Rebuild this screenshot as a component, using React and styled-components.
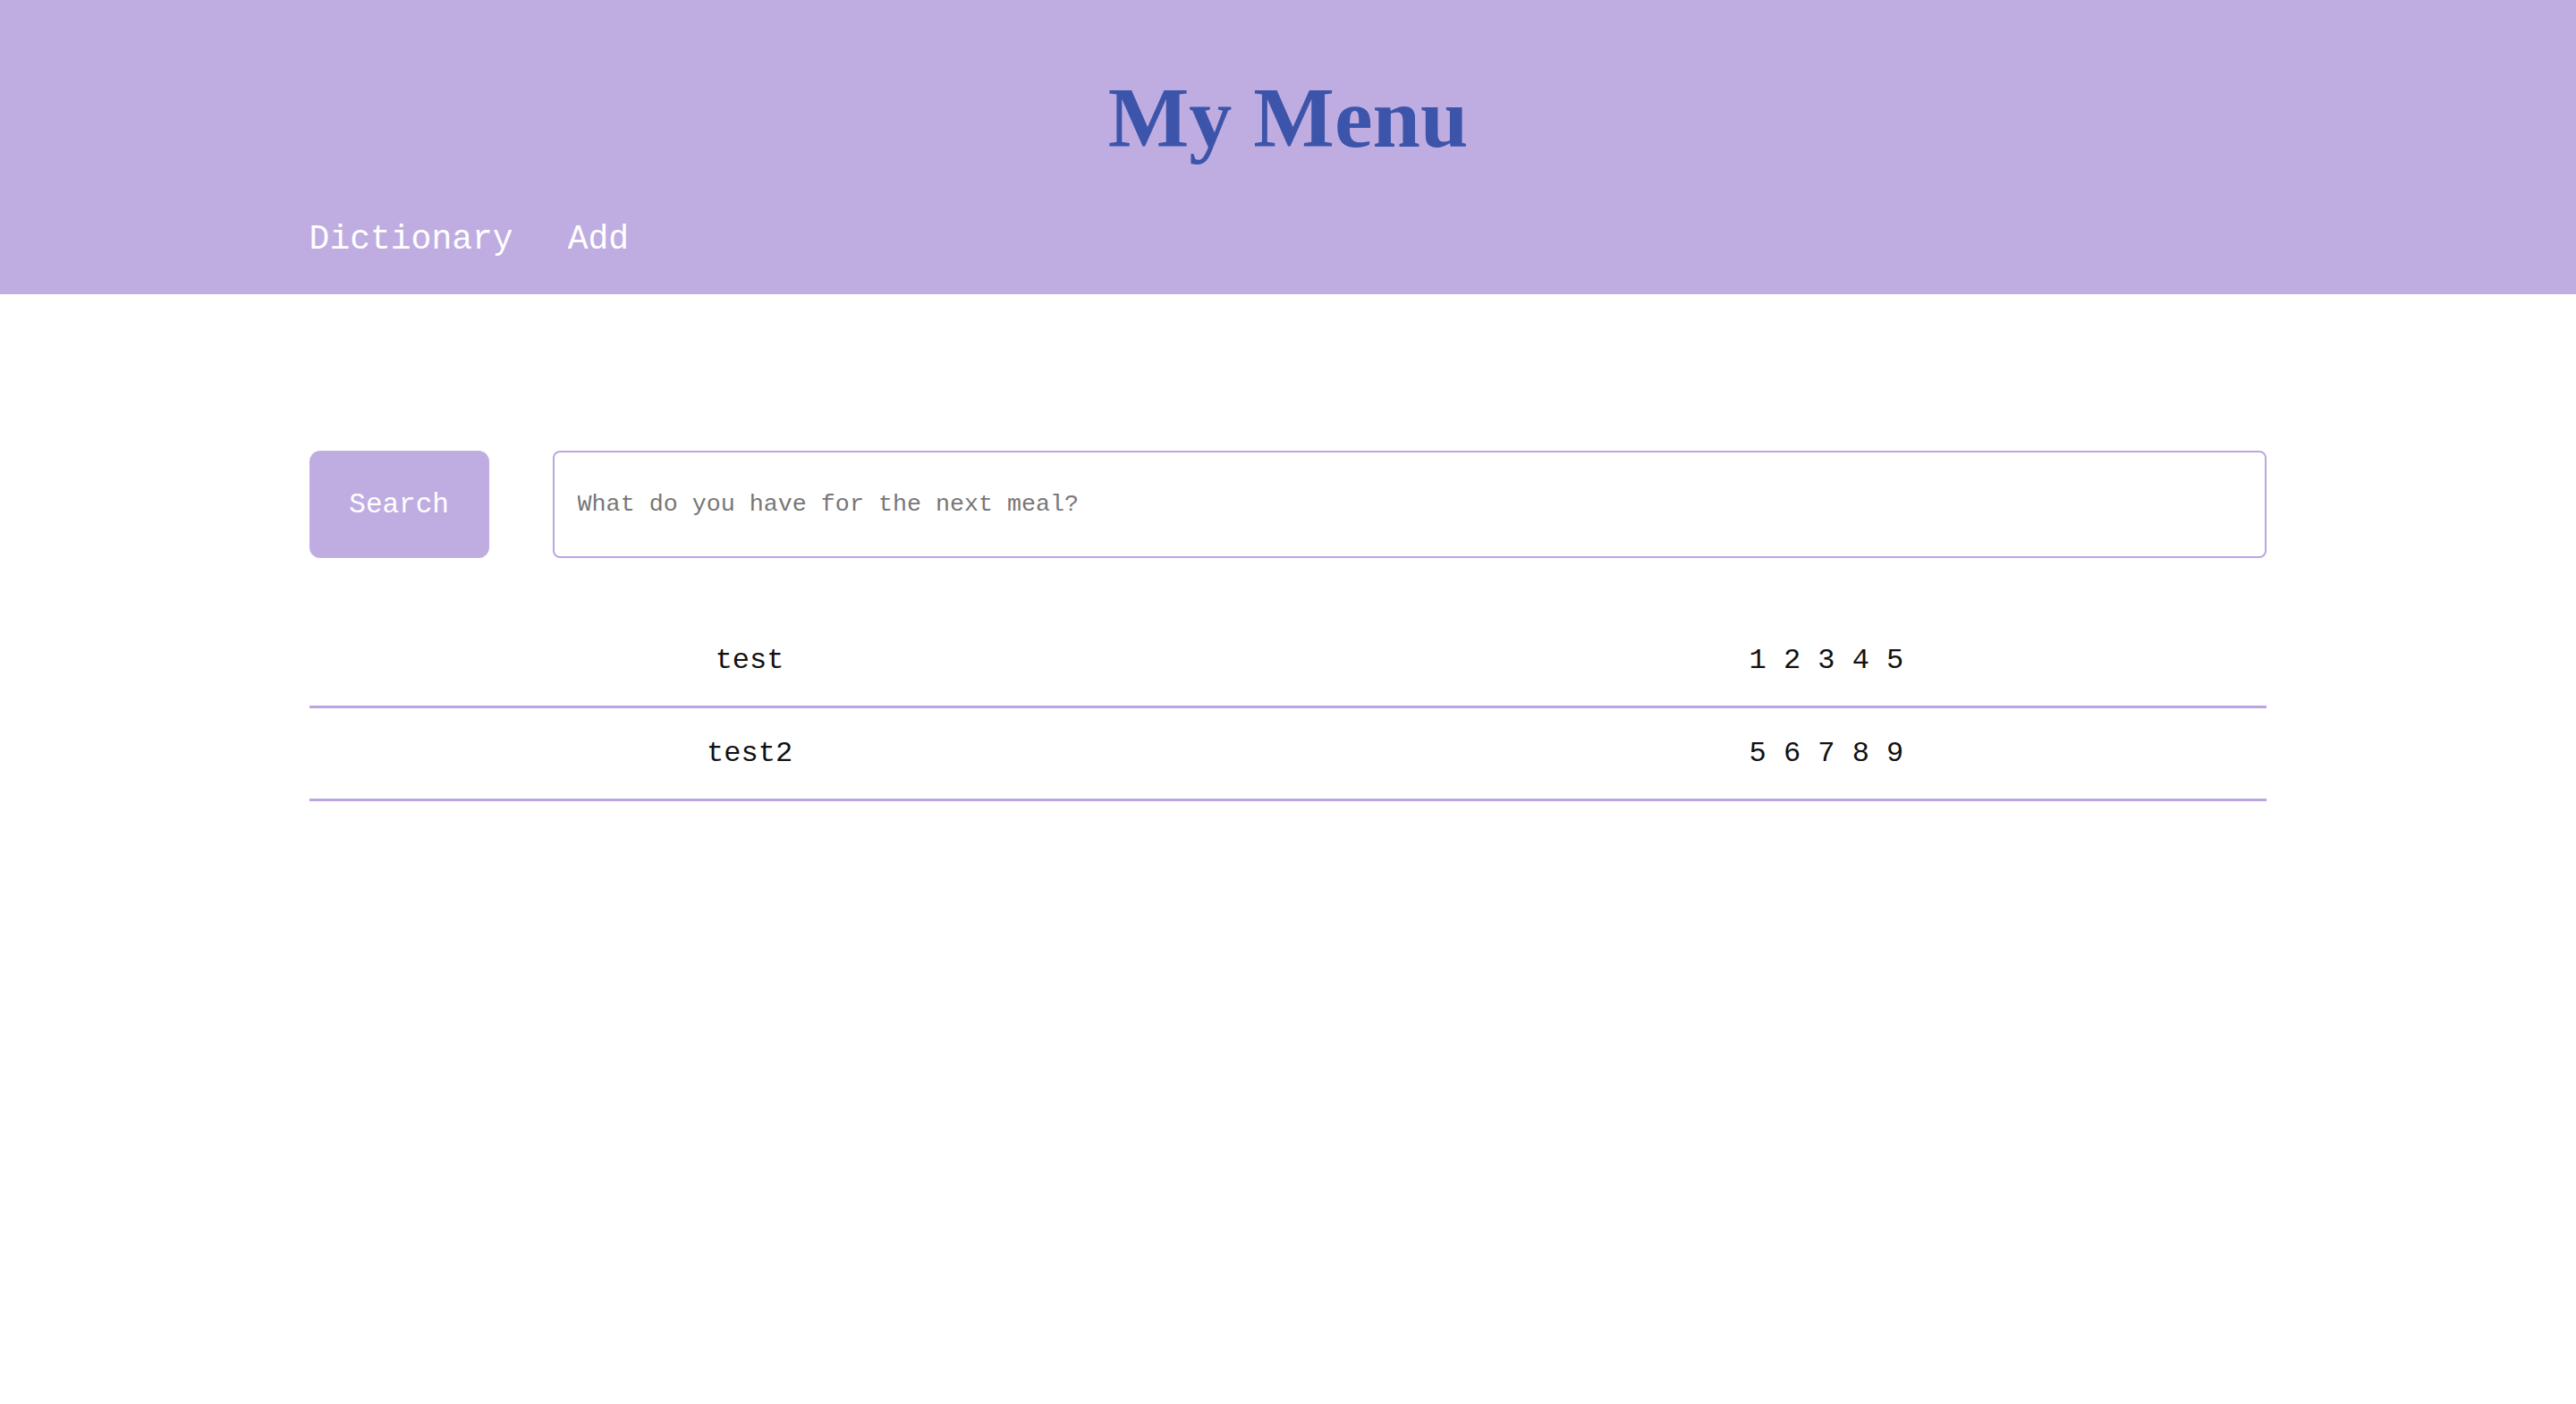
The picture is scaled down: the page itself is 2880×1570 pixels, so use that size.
import React from "react";
import styled, { createGlobalStyle } from "styled-components";

const GlobalStyle = createGlobalStyle`
  html, body { margin: 0; padding: 0; background: #ffffff; }
  body { font-family: "Liberation Mono", "DejaVu Sans Mono", monospace; }
  * { box-sizing: border-box; }
`;

const Header = styled.header`
  background: #bfade1;
  padding: 84px 0 42px;
`;

const Title = styled.h1`
  margin: 0;
  text-align: center;
  font-family: "Liberation Serif", "Times New Roman", serif;
  font-weight: 700;
  font-size: 96px;
  line-height: 96px;
  color: #3c55ab;
`;

const Nav = styled.nav`
  width: 76%;
  margin: 69px auto 0;
  display: flex;
  gap: 61px;
`;

const NavLink = styled.a`
  font-family: "Liberation Mono", monospace;
  font-size: 38px;
  line-height: 38px;
  color: #ffffff;
  text-decoration: none;
  cursor: pointer;
`;

const Main = styled.main`
  width: 76%;
  margin: 0 auto;
  padding-top: 175px;
`;

const SearchRow = styled.form`
  display: flex;
  gap: 71px;
  height: 120px;
  margin-bottom: 64px;
`;

const SearchButton = styled.button`
  flex: 0 0 201px;
  border: none;
  border-radius: 12px;
  background: #bfade1;
  color: #ffffff;
  font-family: "Liberation Mono", monospace;
  font-size: 31px;
  cursor: pointer;
`;

const SearchInput = styled.input`
  flex: 1;
  border: 2px solid #bba6e3;
  border-radius: 8px;
  padding: 0 26px;
  font-family: "Liberation Mono", monospace;
  font-size: 26.7px;
  color: #222;
  outline: none;
  &::placeholder { color: #777777; }
`;

const Row = styled.div`
  display: grid;
  grid-template-columns: 1fr 1fr;
  column-gap: 10%;
  height: 104px;
  align-items: center;
  border-bottom: 3px solid #bba6e3;
`;

const Cell = styled.div`
  text-align: center;
  font-family: "Liberation Mono", monospace;
  font-size: 32px;
  color: #111111;
  white-space: pre;
`;

const items = [
  { name: "test", values: [1, 2, 3, 4, 5] },
  { name: "test2", values: [5, 6, 7, 8, 9] },
];

export default function App() {
  return (
    <>
      <GlobalStyle />
      <Header>
        <Title>My Menu</Title>
        <Nav>
          <NavLink>Dictionary</NavLink>
          <NavLink>Add</NavLink>
        </Nav>
      </Header>
      <Main>
        <SearchRow onSubmit={(e) => e.preventDefault()}>
          <SearchButton type="submit">Search</SearchButton>
          <SearchInput placeholder="What do you have for the next meal?" />
        </SearchRow>
        {items.map((it) => (
          <Row key={it.name}>
            <Cell>{it.name}</Cell>
            <Cell>{it.values.join(" ")}</Cell>
          </Row>
        ))}
      </Main>
    </>
  );
}
